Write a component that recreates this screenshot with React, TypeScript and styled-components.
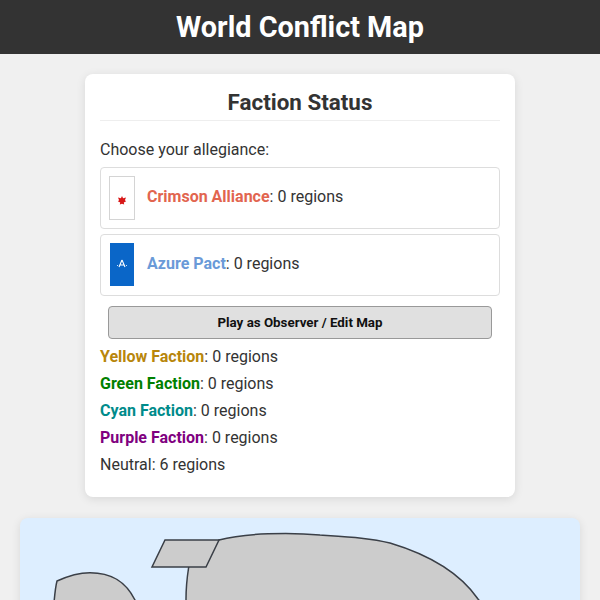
import { createGlobalStyle } from "styled-components";
import styled from "styled-components";

const GlobalStyle = createGlobalStyle`
  html, body {
    margin: 0;
    padding: 0;
    background: #f0f0f0;
    color: #333;
    font-family: Roboto, "Liberation Sans", sans-serif;
    height: 600px;
    overflow: hidden;
  }
`;

const Header = styled.header`
  background: #333;
  color: #fff;
  height: 54px;
  display: flex;
  align-items: center;
  justify-content: center;
`;

const Title = styled.h1`
  margin: 0;
  font-size: 28.8px;
  font-weight: 700;
`;

const Main = styled.main`
  display: flex;
  flex-direction: column;
  align-items: center;
  gap: 21px;
  padding-top: 20px;
`;

const Panel = styled.section`
  width: 430px;
  box-sizing: border-box;
  background: #fff;
  border-radius: 8px;
  box-shadow: 0 2px 10px rgba(0, 0, 0, 0.1);
  padding: 15px 15px 19px;
`;

const PanelTitle = styled.h2`
  margin: 0 0 17px;
  padding-bottom: 5px;
  font-size: 22.4px;
  line-height: 26px;
  font-weight: 700;
  text-align: center;
  color: #333;
  border-bottom: 1px solid #eee;
`;

const Prompt = styled.p`
  margin: 0 0 5px;
  font-size: 16px;
  line-height: 24px;
`;

const Choice = styled.div`
  display: flex;
  align-items: center;
  gap: 12px;
  height: 62px;
  box-sizing: border-box;
  margin-bottom: 5px;
  padding: 0 8px;
  background: #fff;
  border: 1px solid #ddd;
  border-radius: 4px;
  font-size: 16px;
`;

const ChoiceLabel = styled.span`
  margin-bottom: 4px;
`;

const Flag = styled.svg`
  width: 26px;
  height: 44px;
  flex: none;
`;

const Name = styled.strong<{ $color: string }>`
  color: ${(p) => p.$color};
  font-weight: 700;
`;

const ObserverButton = styled.button`
  display: block;
  width: 384px;
  height: 33px;
  margin: 10px auto 4px;
  background: #e0e0e0;
  border: 1px solid #999;
  border-radius: 4px;
  color: #111;
  font-family: inherit;
  font-size: 13.33px;
  font-weight: 700;
`;

const Status = styled.div`
  font-size: 16px;
  line-height: 27px;
`;

const MapPanel = styled.section`
  width: 560px;
  height: 400px;
  flex: none;
  background: #ddeeff;
  border-radius: 8px;
  box-shadow: 0 2px 10px rgba(0, 0, 0, 0.1);
  overflow: hidden;
`;

const MapDrawing = styled.svg`
  display: block;
  width: 560px;
  height: 400px;
`;

const factions = [
  { name: "Yellow Faction", color: "#b8860b" },
  { name: "Green Faction", color: "#008000" },
  { name: "Cyan Faction", color: "#008b8b" },
  { name: "Purple Faction", color: "#800080" },
];

export default function App() {
  return (
    <>
      <GlobalStyle />
      <Header>
        <Title>World Conflict Map</Title>
      </Header>
      <Main>
        <Panel>
          <PanelTitle>Faction Status</PanelTitle>
          <Prompt>Choose your allegiance:</Prompt>
          <Choice>
            <Flag viewBox="0 0 26 44">
              <rect x="0.5" y="0.5" width="25" height="43" fill="#fff" stroke="#d4d4d4" />
              <path
                d="M13 20l1.100 2.300 2.900-.8-1.100 2.700 1.300 1-2.400 1.200.4 2-2.200-.7-2.200.7.4-2-2.400-1.200 1.300-1-1.100-2.700 2.900.8z"
                fill="#d81818"
              />
            </Flag>
            <ChoiceLabel>
              <Name $color="#e2654f">Crimson Alliance</Name>: 0 regions
            </ChoiceLabel>
          </Choice>
          <Choice>
            <Flag viewBox="0 0 26 44">
              <rect x="1" y="0" width="24" height="43" fill="#0a66c8" />
              <path d="M13 17l-3 7M13 17l3 7M11 22h4" stroke="#fff" strokeWidth="1.100" fill="none" />
              <path d="M8 22.500h1M17 22.500h1" stroke="#cfe2f7" strokeWidth="1" />
            </Flag>
            <ChoiceLabel>
              <Name $color="#6a9ad8">Azure Pact</Name>: 0 regions
            </ChoiceLabel>
          </Choice>
          <ObserverButton>Play as Observer / Edit Map</ObserverButton>
          {factions.map((f) => (
            <Status key={f.name}>
              <Name $color={f.color}>{f.name}</Name>: 0 regions
            </Status>
          ))}
          <Status>Neutral: 6 regions</Status>
        </Panel>
        <MapPanel>
          <MapDrawing viewBox="0 0 560 400">
            <g fill="#ccc" stroke="#3a3f47" strokeWidth="1.5">
              <path d="M168.700 49C167 60 166 70 166 81V400H500V140C485 110 470 95 458 81C440 55 410 37 370 25C350 20 330 19 300 17C270 14 225 15 199 22Z" />
              <path d="M37 63C50 57 60 54.700 70 54.700C90 54.700 105 62 115 82C125 110 130 200 130 400H30C30 200 30 90 37 63Z" />
              <path d="M145 22H199L186 49H132Z" />
            </g>
          </MapDrawing>
        </MapPanel>
      </Main>
    </>
  );
}
